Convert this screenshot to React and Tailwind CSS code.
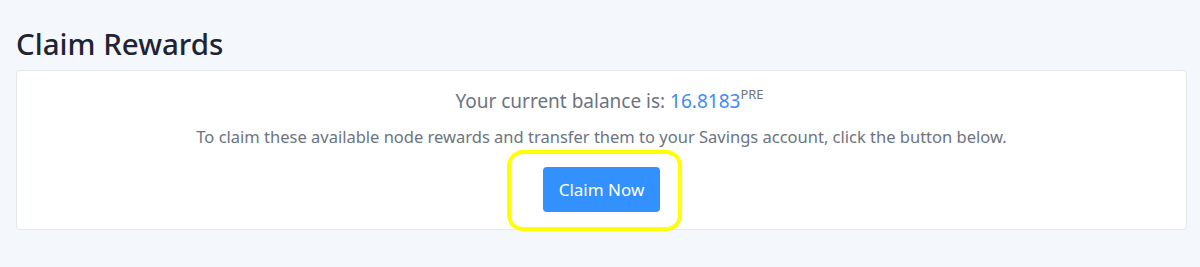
export default function App() {
  return (
    <div
      className="min-h-[267px] bg-[#f4f7fb] pt-[24px]"
      style={{ fontFamily: '"Noto Sans", "Open Sans", sans-serif' }}
    >
      {/* Page header */}
      <h1 className="ml-4 text-[29.5px] leading-[40px] font-medium text-[#1f2433] mb-[6px]">
        Claim Rewards
      </h1>

      {/* Card */}
      <div className="ml-4 mr-[13px] bg-white border border-[#e3e8ef] rounded-[4px] h-[160px] pt-[16px] flex flex-col items-center">
        <p className="ml-[16px] text-[19px] leading-[28px] text-[#6c7480]">
          Your current balance is:{' '}
          <span className="text-[#3d8bf7]">16.8183</span>
          <span className="relative top-[-9px] text-[13px]">PRE</span>
        </p>
        <p className="mt-[8px] text-[16.5px] leading-[24px] text-[#6c7480]">
          To claim these available node rewards and transfer them to your Savings account, click the button below.
        </p>
        <div className="relative mt-[18px]">
          <button className="h-[45px] w-[117px] text-[17px] text-white bg-[#3390ff] rounded-[4px]">
            Claim Now
          </button>
          {/* highlight annotation */}
          <div className="absolute left-[-36px] right-[-22px] top-[-17px] bottom-[-19px] border-4 border-[#ffff00] rounded-[16px] pointer-events-none" />
        </div>
      </div>
    </div>
  );
}
